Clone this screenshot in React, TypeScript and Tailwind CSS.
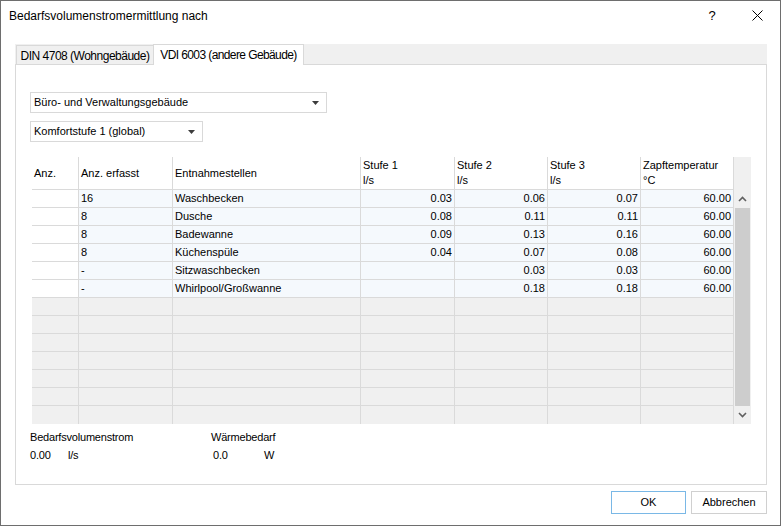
import React from 'react';

// ── Data ──────────────────────────────────────────────────────────────────────

type Row = { erfasst: string; name: string; s1: string; s2: string; s3: string; temp: string };

const ROWS: Row[] = [
  { erfasst: '16', name: 'Waschbecken',        s1: '0.03', s2: '0.06', s3: '0.07', temp: '60.00' },
  { erfasst: '8',  name: 'Dusche',             s1: '0.08', s2: '0.11', s3: '0.11', temp: '60.00' },
  { erfasst: '8',  name: 'Badewanne',          s1: '0.09', s2: '0.13', s3: '0.16', temp: '60.00' },
  { erfasst: '8',  name: 'Küchenspüle',        s1: '0.04', s2: '0.07', s3: '0.08', temp: '60.00' },
  { erfasst: '-',  name: 'Sitzwaschbecken',    s1: '',     s2: '0.03', s3: '0.03', temp: '60.00' },
  { erfasst: '-',  name: 'Whirlpool/Großwanne', s1: '',    s2: '0.18', s3: '0.18', temp: '60.00' },
];

const EMPTY_ROWS = 7;

const COLS = 'grid grid-cols-[46px_94px_188px_94px_93px_93px_94px]';
const UI = "font-['Segoe_UI','Liberation_Sans',Arial,sans-serif]";
const CELL = "font-['Liberation_Sans',Arial,sans-serif] text-[11px] leading-[17px] h-[18px] border-b border-[#dadada] text-black overflow-hidden whitespace-nowrap";

// column borders: none on the first column's left, a line left of every other, and one closing on the right
const edge = (j: number) => (j === 0 ? '' : j === 6 ? 'border-l border-r' : 'border-l');

// ── Bits ──────────────────────────────────────────────────────────────────────

function Caret() {
  return (
    <svg width="7" height="4" viewBox="0 0 7 4" className="shrink-0">
      <polygon points="0,0 7,0 3.5,4" fill="#3c3c3c" />
    </svg>
  );
}

function Dropdown({ label, width }: { label: string; width: string }) {
  return (
    <div className={`${width} h-[21px] border border-[#d9d9d9] bg-white flex items-center pl-[3px] pr-[7px]`}>
      <span className="flex-1 text-[11px] text-black whitespace-nowrap">{label}</span>
      <Caret />
    </div>
  );
}

function Chevron({ up }: { up?: boolean }) {
  return (
    <svg width="9" height="6" viewBox="0 0 9 6">
      <polyline
        points={up ? '1,5 4.5,1.5 8,5' : '1,1 4.5,4.5 8,1'}
        fill="none"
        stroke="#606060"
        strokeWidth="1.6"
      />
    </svg>
  );
}

function HeadCell({ l1, l2, j }: { l1: string; l2?: string; j: number }) {
  return (
    <div
      className={`h-[33px] border-b border-[#dadada] ${edge(j)} flex flex-col justify-center px-[2px] font-['Liberation_Sans',Arial,sans-serif] text-[11px] leading-[15px] text-black whitespace-nowrap`}
    >
      <span>{l1}</span>
      {l2 && <span>{l2}</span>}
    </div>
  );
}

// ── Main ──────────────────────────────────────────────────────────────────────

export default function App() {
  return (
    <div className={`w-[781px] h-[526px] border border-[#6e6e6e] bg-white flex flex-col ${UI}`}>

      {/* ── Title bar ── */}
      <div className="h-[29px] flex items-center pl-[8px] text-[12px] text-black">
        <span className="flex-1">Bedarfsvolumenstromermittlung nach</span>
        <span className="w-[20px] text-center mr-[30px] text-[13px]">?</span>
        <svg width="11" height="11" viewBox="0 0 11 11" className="mr-[17px]">
          <path d="M0.5 0.5 L10.5 10.5 M10.5 0.5 L0.5 10.5" stroke="#000" strokeWidth="1" />
        </svg>
      </div>

      {/* ── Tabs ── */}
      <div className="mt-[14px] ml-[14px] w-[752px]">
        <div className="h-[20px] bg-[#f0f0f0] flex items-end">
          <div className="ml-[1px] h-[19px] w-[138px] shrink-0 border border-b-0 border-[#d9d9d9] bg-[#f0f0f0] flex items-center justify-center pt-[2px] text-[12px] tracking-[-0.5px] text-black whitespace-nowrap">
            DIN 4708 (Wohngebäude)
          </div>
          <div className="relative z-10 -mb-px h-[21px] w-[151px] shrink-0 -ml-px border border-b-0 border-[#d9d9d9] bg-white flex items-start justify-center pt-[1px] text-[12px] tracking-[-0.6px] text-black whitespace-nowrap">
            VDI 6003 (andere Gebäude)
          </div>
        </div>

        {/* ── Panel ── */}
        <div className="h-[421px] border border-[#d9d9d9] bg-white flex flex-col">
          <div className="mt-[27px] ml-[14px] flex flex-col gap-[8px]">
            <Dropdown label="Büro- und Verwaltungsgebäude" width="w-[297px]" />
            <Dropdown label="Komfortstufe 1 (global)" width="w-[173px]" />
          </div>

          {/* ── Table ── */}
          <div className="mt-[15px] ml-[16px] flex">
            <div className="flex flex-col">
              <div className={COLS}>
                <HeadCell j={0} l1="Anz." />
                <HeadCell j={1} l1="Anz. erfasst" />
                <HeadCell j={2} l1="Entnahmestellen" />
                <HeadCell j={3} l1="Stufe 1" l2="l/s" />
                <HeadCell j={4} l1="Stufe 2" l2="l/s" />
                <HeadCell j={5} l1="Stufe 3" l2="l/s" />
                <HeadCell j={6} l1="Zapftemperatur" l2="°C" />
              </div>
              {ROWS.map((r) => (
                <div key={r.name} className={COLS}>
                  <div className={`${CELL} ${edge(0)} bg-white`} />
                  <div className={`${CELL} ${edge(1)} bg-[#f5f9fd] pl-[2px]`}>{r.erfasst}</div>
                  <div className={`${CELL} ${edge(2)} bg-[#f5f9fd] pl-[2px]`}>{r.name}</div>
                  <div className={`${CELL} ${edge(3)} bg-[#f5f9fd] pr-[2px] text-right`}>{r.s1}</div>
                  <div className={`${CELL} ${edge(4)} bg-[#f5f9fd] pr-[2px] text-right`}>{r.s2}</div>
                  <div className={`${CELL} ${edge(5)} bg-[#f5f9fd] pr-[2px] text-right`}>{r.s3}</div>
                  <div className={`${CELL} ${edge(6)} bg-[#f5f9fd] pr-[2px] text-right`}>{r.temp}</div>
                </div>
              ))}
              {Array.from({ length: EMPTY_ROWS }).map((_, i) => (
                <div key={i} className={COLS}>
                  {Array.from({ length: 7 }).map((__, j) => (
                    <div key={j} className={`${CELL} ${edge(j)} bg-[#f0f0f0] ${i === EMPTY_ROWS - 1 ? 'border-b-0' : ''}`} />
                  ))}
                </div>
              ))}
            </div>

            {/* ── Scrollbar ── */}
            <div className="w-[17px] flex flex-col bg-[#f0f0f0]">
              <div className="h-[33px]" />
              <div className="h-[18px] flex items-center justify-center">
                <Chevron up />
              </div>
              <div className="h-[198px] ml-[1px] w-[15px] bg-[#cdcdcd]" />
              <div className="h-[17px] flex items-center justify-center">
                <Chevron />
              </div>
            </div>
          </div>

          {/* ── Totals ── */}
          <div className="mt-[5px] ml-[14px] grid grid-cols-[181px_120px] text-[11px] tracking-[-0.2px] leading-[16px] text-black">
            <span>Bedarfsvolumenstrom</span>
            <span>Wärmebedarf</span>
            <div className="mt-[2px] flex">
              <span className="w-[38px]">0.00</span>
              <span>l/s</span>
            </div>
            <div className="mt-[2px] flex pl-[2px]">
              <span className="w-[51px]">0.0</span>
              <span>W</span>
            </div>
          </div>
        </div>
      </div>

      {/* ── Buttons ── */}
      <div className="mt-[6px] pr-[13px] flex justify-end gap-[5px]">
        <button className="w-[75px] h-[23px] border border-[#7ab8e6] bg-white text-[11px] text-black">OK</button>
        <button className="w-[76px] h-[23px] border border-[#d0d0d0] bg-white text-[11px] text-black">Abbrechen</button>
      </div>
    </div>
  );
}
